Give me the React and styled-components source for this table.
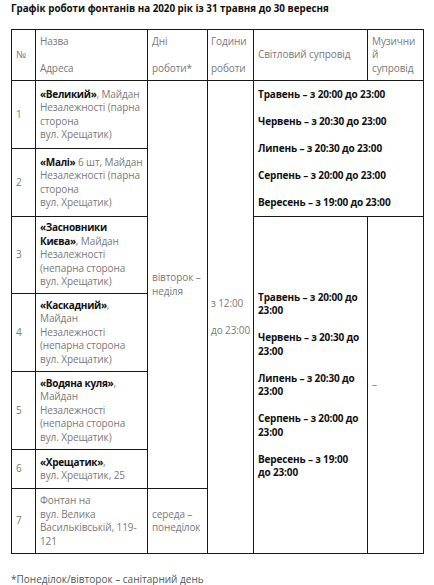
import React from "react";
import styled, { createGlobalStyle } from "styled-components";

const GlobalStyle = createGlobalStyle`
  html, body {
    margin: 0;
    padding: 0;
    background: #fff;
  }
  body {
    font-family: "Open Sans", "DejaVu Sans", sans-serif;
  }
`;

const Page = styled.div`
  width: 434px;
  padding: 2px 11px 0 11px;
  box-sizing: border-box;
`;

const Title = styled.h3`
  margin: 0 0 13px 0;
  font-size: 9.8px;
  line-height: 14px;
  font-weight: 700;
  color: #111;
`;

const Table = styled.table`
  width: 412px;
  border-collapse: collapse;
  table-layout: fixed;
`;

const Row = styled.tr`
  height: ${(p) => p.$h}px;
`;

const Cell = styled.td`
  border: 1px solid #1a1a1a;
  padding: 3px 4px;
  vertical-align: middle;
  font-size: 10px;
  line-height: 13.5px;
  letter-spacing: -0.1px;
  color: #7a7a7a;
  overflow-wrap: anywhere;
`;

const Num = styled(Cell)`
  padding-left: 4px;
`;

const Address = styled(Cell)`
  padding-right: 3px;
`;

const Hours = styled(Cell)`
  padding-left: 3px;
  padding-right: 2px;
`;

const Music = styled(Cell)`
  padding-right: 7px;
`;

const Para = styled.p`
  margin: 0;
  & + & {
    margin-top: 13.5px;
  }
`;

const Name = styled.b`
  color: #111;
  font-weight: 700;
  letter-spacing: -0.3px;
`;

const Light = styled(Cell)`
  color: #111;
  font-weight: 700;
  letter-spacing: -0.15px;
`;

const Note = styled.p`
  margin: 19px 0 0 0;
  font-size: 10px;
  line-height: 13px;
  color: #555;
`;

const months = [
  ["Травень", "20:00"],
  ["Червень", "20:30"],
  ["Липень", "20:30"],
  ["Серпень", "20:00"],
  ["Вересень", "19:00"],
];

const Schedule = ({ cols, rows }) => (
  <Light colSpan={cols} rowSpan={rows}>
    {months.map(([m, t]) => (
      <Para key={m}>
        {m} – з {t} до 23:00
      </Para>
    ))}
  </Light>
);

const street = "вул.\u00a0Хрещатик)";

const fountains = [
  { n: 1, name: "«Великий»", rest: `, Майдан Незалежності (парна сторона ${street}`, h: 68 },
  { n: 2, name: "«Малі»", rest: ` 6 шт, Майдан Незалежності (парна сторона ${street}`, h: 68 },
  { n: 3, name: "«Засновники Києва»", rest: `, Майдан Незалежності (непарна сторона ${street}`, h: 77 },
  { n: 4, name: "«Каскадний»", rest: `, Майдан Незалежності (непарна сторона ${street}`, h: 78 },
  { n: 5, name: "«Водяна куля»", rest: `, Майдан Незалежності (непарна сторона ${street}`, h: 78 },
  { n: 6, name: "«Хрещатик»", rest: ", вул.\u00a0Хрещатик,\u00a025", h: 39 },
];

export default function App() {
  return (
    <>
      <GlobalStyle />
      <Page>
        <Title>Графік роботи фонтанів на 2020 рік із 31 травня до 30 вересня</Title>
        <Table>
          <colgroup>
            <col style={{ width: 24 }} />
            <col style={{ width: 112 }} />
            <col style={{ width: 60 }} />
            <col style={{ width: 46 }} />
            <col style={{ width: 114 }} />
            <col style={{ width: 56 }} />
          </colgroup>
          <tbody>
            <Row $h={51}>
              <Num>№</Num>
              <Cell>
                <Para>Назва</Para>
                <Para>Адреса</Para>
              </Cell>
              <Cell>
                <Para>Дні</Para>
                <Para>роботи*</Para>
              </Cell>
              <Hours>
                <Para>Години</Para>
                <Para>роботи</Para>
              </Hours>
              <Cell>Світловий супровід</Cell>
              <Music>Музичний супровід</Music>
            </Row>
            {fountains.map((f) => (
              <Row key={f.n} $h={f.h}>
                <Num>{f.n}</Num>
                <Address>
                  <Name>{f.name}</Name>
                  {f.rest}
                </Address>
                {f.n === 1 && (
                  <>
                    <Cell rowSpan={6}>вівторок – неділя</Cell>
                    <Hours rowSpan={7}>
                      <Para>з 12:00</Para>
                      <Para>до{"\u00a0"}23:00</Para>
                    </Hours>
                    <Schedule cols={2} rows={2} />
                  </>
                )}
                {f.n === 3 && (
                  <>
                    <Schedule cols={1} rows={5} />
                    <Cell rowSpan={5}>–</Cell>
                  </>
                )}
              </Row>
            ))}
            <Row $h={65}>
              <Num>7</Num>
              <Address>Фонтан на вул.{"\u00a0"}Велика Васильківській, 119-121</Address>
              <Cell>середа – понеділок</Cell>
            </Row>
          </tbody>
        </Table>
        <Note>*Понеділок/вівторок – санітарний день</Note>
      </Page>
    </>
  );
}
